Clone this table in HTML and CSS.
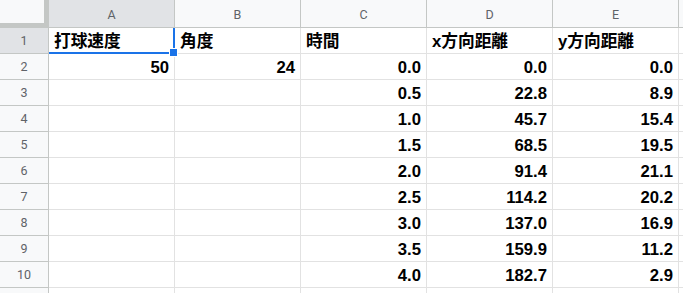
FILE: index.html
```html
<!DOCTYPE html>
<html lang="ja">
<head>
<meta charset="utf-8">
<link rel="stylesheet" href="styles.css">
</head>
<body>
<div class="sheet">
  <div class="corner"></div>
  <div class="ch sel">A</div>
  <div class="ch">B</div>
  <div class="ch">C</div>
  <div class="ch">D</div>
  <div class="ch">E</div>
  <div class="ch more"></div>

  <div class="rh sel">1</div>
  <div class="c t active">打球速度<span class="handle"></span></div>
  <div class="c t">角度</div>
  <div class="c t">時間</div>
  <div class="c t">x方向距離</div>
  <div class="c t">y方向距離</div>
  <div class="c"></div>

  <div class="rh">2</div>
  <div class="c n">50</div><div class="c n">24</div><div class="c n">0.0</div><div class="c n">0.0</div><div class="c n">0.0</div><div class="c"></div>
  <div class="rh">3</div>
  <div class="c"></div><div class="c"></div><div class="c n">0.5</div><div class="c n">22.8</div><div class="c n">8.9</div><div class="c"></div>
  <div class="rh">4</div>
  <div class="c"></div><div class="c"></div><div class="c n">1.0</div><div class="c n">45.7</div><div class="c n">15.4</div><div class="c"></div>
  <div class="rh">5</div>
  <div class="c"></div><div class="c"></div><div class="c n">1.5</div><div class="c n">68.5</div><div class="c n">19.5</div><div class="c"></div>
  <div class="rh">6</div>
  <div class="c"></div><div class="c"></div><div class="c n">2.0</div><div class="c n">91.4</div><div class="c n">21.1</div><div class="c"></div>
  <div class="rh">7</div>
  <div class="c"></div><div class="c"></div><div class="c n">2.5</div><div class="c n">114.2</div><div class="c n">20.2</div><div class="c"></div>
  <div class="rh">8</div>
  <div class="c"></div><div class="c"></div><div class="c n">3.0</div><div class="c n">137.0</div><div class="c n">16.9</div><div class="c"></div>
  <div class="rh">9</div>
  <div class="c"></div><div class="c"></div><div class="c n">3.5</div><div class="c n">159.9</div><div class="c n">11.2</div><div class="c"></div>
  <div class="rh">10</div>
  <div class="c"></div><div class="c"></div><div class="c n">4.0</div><div class="c n">182.7</div><div class="c n">2.9</div><div class="c"></div>
  <div class="rh tail"></div>
  <div class="c tail"></div><div class="c tail"></div><div class="c tail"></div><div class="c tail"></div><div class="c tail"></div><div class="c tail"></div>
</div>
</body>
</html>
```

FILE: styles.css
```css
html, body {
  margin: 0;
  padding: 0;
  background: #ffffff;
  overflow: hidden;
}

.sheet {
  display: grid;
  width: 100vw;
  height: 100vh;
  overflow: hidden;
  grid-template-columns: 49px repeat(5, 126px) 1fr;
  grid-template-rows: 28px repeat(10, 26px) 1fr;
  font-family: "Liberation Sans", "Noto Sans CJK JP", Arial, sans-serif;
}

.corner {
  background: #f8f9fa;
  border-right: 5px solid #c4c7c5;
  border-bottom: 5px solid #c4c7c5;
  box-sizing: border-box;
}

.ch {
  background: #f8f9fa;
  border-right: 1px solid #c4c7c5;
  border-bottom: 1px solid #c4c7c5;
  color: #5f6368;
  font-family: Roboto, "Liberation Sans", sans-serif;
  font-size: 12.5px;
  display: flex;
  align-items: center;
  justify-content: center;
  padding-top: 2px;
  box-sizing: border-box;
}

.ch.more {
  border-right: none;
}

.rh {
  background: #f8f9fa;
  border-right: 1px solid #c4c7c5;
  border-bottom: 1px solid #c4c7c5;
  color: #5f6368;
  font-family: Roboto, "Liberation Sans", sans-serif;
  font-size: 12.5px;
  display: flex;
  align-items: center;
  justify-content: center;
  box-sizing: border-box;
}

.sel {
  background: #e1e3e6;
}

.c {
  border-right: 1px solid #e2e2e2;
  border-bottom: 1px solid #e2e2e2;
  box-sizing: border-box;
  display: flex;
  align-items: flex-end;
  padding: 0 5px 1px 5px;
  font-size: 16.7px;
  font-weight: bold;
  color: #000000;
  white-space: nowrap;
  position: relative;
  min-width: 0;
}

.tail {
  border-bottom: none;
}

.t {
  justify-content: flex-start;
}

.n {
  justify-content: flex-end;
}

.active {
  border-right: 2px solid #1a73e8;
  border-bottom: 2px solid #1a73e8;
  padding-bottom: 0;
}

.handle {
  position: absolute;
  right: -5px;
  bottom: -5px;
  width: 7px;
  height: 7px;
  background: #1a73e8;
  border: 1px solid #ffffff;
  z-index: 2;
}
```
